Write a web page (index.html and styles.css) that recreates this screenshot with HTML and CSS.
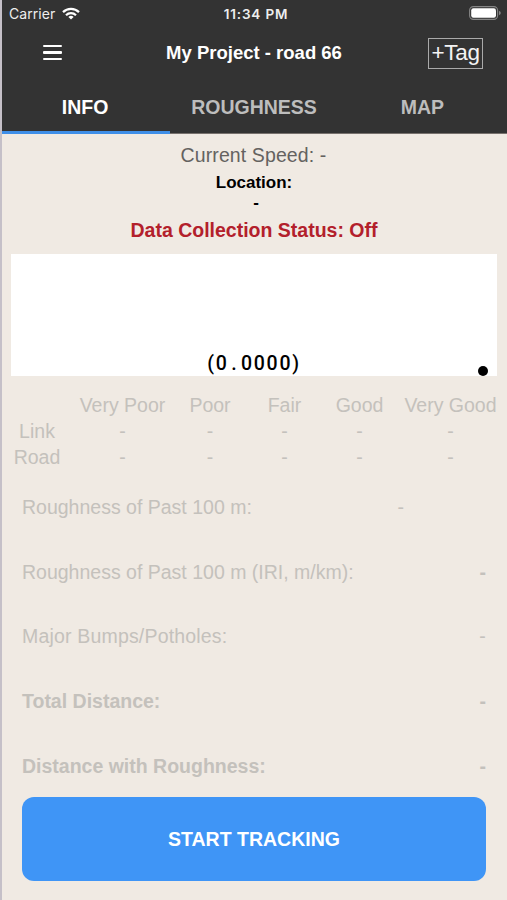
FILE: index.html
```html
<!DOCTYPE html>
<html lang="en">
<head>
<meta charset="utf-8">
<title>My Project - road 66</title>
<link rel="stylesheet" href="styles.css">
</head>
<body>
<div class="app">
  <header class="header">
    <div class="status-bar">
      <span class="carrier">Carrier
        <svg class="wifi" viewBox="0 0 18 13" width="18" height="13"><g fill="none" stroke="#fff" stroke-width="2.2"><path d="M1 5.1a11.3 11.3 0 0 1 16 0"/><path d="M4 8.2a7.1 7.1 0 0 1 10 0"/></g><path d="M9 12.6 6.4 10a3.7 3.7 0 0 1 5.2 0z" fill="#fff"/></svg>
      </span>
      <span class="time">11:34 PM</span>
      <svg class="battery" viewBox="0 0 32 14" width="32" height="14"><rect x=".6" y=".6" width="28" height="12.8" rx="3.8" fill="none" stroke="#858585" stroke-width="1.1"/><rect x="2.2" y="2.2" width="24.8" height="9.6" rx="2.2" fill="#fff"/><path d="M30 4.8q1.8.7 1.8 2.2T30 9.2z" fill="#858585"/></svg>
    </div>
    <div class="nav">
      <button class="menu" aria-label="Menu"><span></span><span></span><span></span></button>
      <h1 class="title">My Project - road 66</h1>
      <button class="tag"><span>+Tag</span></button>
    </div>
    <nav class="tabs">
      <a class="tab active">INFO</a>
      <a class="tab">ROUGHNESS</a>
      <a class="tab">MAP</a>
    </nav>
  </header>
  <main class="content">
    <p class="speed">Current Speed: -</p>
    <p class="location">Location:</p>
    <p class="location-value">-</p>
    <p class="collection">Data Collection Status: Off</p>
    <section class="chart"><span class="reading">(0<span class="point">.</span>0000)</span><i class="dot"></i></section>
    <div class="ratings">
      <span></span><span>Very Poor</span><span>Poor</span><span>Fair</span><span>Good</span><span>Very Good</span>
      <span>Link</span><span>-</span><span>-</span><span>-</span><span>-</span><span>-</span>
      <span>Road</span><span>-</span><span>-</span><span>-</span><span>-</span><span>-</span>
    </div>
    <div class="metrics">
      <div class="metric inset"><span>Roughness of Past 100 m:</span><span>-</span></div>
      <div class="metric"><span>Roughness of Past 100 m (IRI, m/km):</span><b>-</b></div>
      <div class="metric bumps"><span>Major Bumps/Potholes:</span><span>-</span></div>
      <div class="metric strong"><span>Total Distance:</span><span>-</span></div>
      <div class="metric strong"><span>Distance with Roughness:</span><span>-</span></div>
    </div>
    <button class="start">START TRACKING</button>
  </main>
</div>
</body>
</html>
```

FILE: styles.css
```css
* { box-sizing: border-box; }
body { margin: 0; font-family: "Liberation Sans", Arial, sans-serif; font-size: 19.5px; }
p, h1 { margin: 0; }
button { padding: 0; border: 0; background: none; color: inherit; font: inherit; }
.app { height: 900px; border-left: 2px solid #c5c0c8; background: #f0eae3; display: flex; flex-direction: column; overflow: hidden; }
.header { background: #333; color: #fff; height: 134px; flex: none; }
.status-bar { height: 27px; display: grid; grid-template-columns: 1fr auto 1fr; align-items: center; padding: 0 6px; font-family: Inter, sans-serif; font-size: 14px; color: #eee; }
.carrier { display: flex; align-items: center; gap: 7px; letter-spacing: .05px; padding-left: 1px; }
.wifi { margin-top: -1px; }
.time { font-weight: 600; font-size: 13.5px; letter-spacing: .85px; margin-left: 3px; }
.battery { justify-self: end; margin-top: -1px; }
.nav { height: 53px; display: grid; grid-template-columns: 100px 1fr 100px; align-items: center; }
.menu { width: 19px; margin: -2px 0 0 41px; display: grid; gap: 4px; }
.menu span { height: 2.4px; background: #fff; border-radius: 1px; }
.title { text-align: center; font-size: 18.5px; line-height: 24px; margin: -2px 1px 0 0; }
.tag { width: 55px; height: 31px; margin-left: 21px; border: 1px solid #aaa; font-size: 22.5px; line-height: 26px; letter-spacing: -.3px; color: #f3f3f3; padding-bottom: 2px; }
.tabs { height: 54px; display: grid; grid-template-columns: repeat(3, 1fr); font-weight: bold; }
.tab { display: flex; align-items: center; justify-content: center; color: #bdbdbd; border-bottom: 1px solid #77716d; padding: 2px 1px 0 0; }
.active { color: #fff; border-bottom: 3px solid #3f8fe8; padding: 4px 2px 0 0; }
.content { flex: 1; }
.speed { height: 37px; line-height: 43px; text-align: center; color: #646260; letter-spacing: .1px; margin-right: 2px; }
.location { height: 21px; line-height: 24px; font-size: 17px; font-weight: bold; text-align: center; margin-right: 1px; }
.location-value { height: 23px; line-height: 21px; font-size: 17px; font-weight: bold; text-align: center; margin-left: 3px; }
.collection { height: 38px; line-height: 30px; font-weight: bold; text-align: center; color: #b3202b; margin-right: 1px; }
.chart { position: relative; height: 122px; margin: 1px 10px 0 9px; background: #fff; display: flex; align-items: flex-end; justify-content: center; }
.reading { font-family: Roboto, sans-serif; font-weight: 500; font-size: 19.5px; line-height: 25px; letter-spacing: 1.7px; color: #000; }
.point { display: inline-block; width: 12.5px; text-align: center; }
.dot { position: absolute; right: 9px; bottom: 0; width: 10px; height: 10px; border-radius: 50%; background: #000; }
.ratings { margin: 16px 0 0 1px; display: grid; grid-template-columns: 68px 103px 72px 77px 73px 109px; grid-auto-rows: 26px; line-height: 26px; text-align: center; color: #c4c1bc; white-space: nowrap; }
.metrics { margin: 5px 21px 0 20px; color: #c4c1bc; }
.metric { height: 64.7px; display: flex; justify-content: space-between; align-items: center; }
.bumps { letter-spacing: .18px; }
.inset { padding-right: 82px; }
.strong { font-weight: bold; }
.start { display: block; width: 464px; height: 84px; margin: -1px 0 0 20px; border-radius: 12px; background: #3f95f6; color: #fff; font-weight: bold; }
```
